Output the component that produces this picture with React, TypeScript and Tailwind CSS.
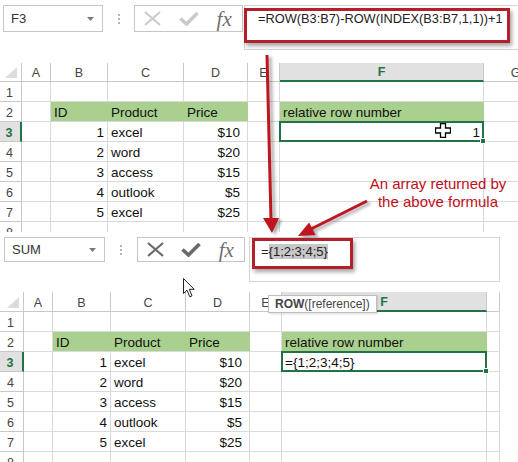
import React from "react";
import { twMerge } from "tailwind-merge";

const data: [number, string, string][] = [
  [1, "excel", "$10"],
  [2, "word", "$20"],
  [3, "access", "$15"],
  [4, "outlook", "$5"],
  [5, "excel", "$25"],
];

const GREEN_FILL = "bg-[#a9d08e] border-r-[#a9d08e]";

function Cell({ className, children }: { className?: string; children?: React.ReactNode }) {
  return (
    <div
      className={twMerge(
        "flex h-[20px] items-end whitespace-nowrap border-r border-b border-[#dadada] text-[13.5px] leading-[16px] text-[#111]",
        className
      )}
    >
      {children}
    </div>
  );
}

function RowHead({ n, sel }: { n: number; sel?: boolean }) {
  return (
    <div
      className={twMerge(
        "flex h-[20px] items-end justify-center border-r border-b border-[#c8c8c8] pr-[2px] text-[12.5px] leading-[16px] text-[#444]",
        sel && "border-r-2 border-r-[#217346] bg-[#e1e1e1] font-bold text-[#217346]"
      )}
    >
      {n}
    </div>
  );
}

function ColHead({ l, sel, h }: { l: string; sel?: boolean; h: string }) {
  return (
    <div
      className={twMerge(
        "flex items-end justify-center border-r border-b border-[#c8c8c8] text-[12.5px] leading-[16px] text-[#444]",
        h,
        sel && "border-b-2 border-b-[#217346] bg-[#e1e1e1] font-bold text-[#217346]"
      )}
    >
      {l}
    </div>
  );
}

function Selection() {
  return (
    <div className="absolute -top-[1px] -right-[1px] -bottom-[1px] -left-[1px] z-10 border-2 border-[#217346]">
      <div className="absolute -right-[4px] -bottom-[4px] h-[6px] w-[6px] border border-white bg-[#217346]" />
    </div>
  );
}

function Sheet({ top }: { top: boolean }) {
  const hh = top ? "h-[19px]" : "h-[20px]";
  const letters = top ? ["A", "B", "C", "D", "E", "F", "G"] : ["A", "B", "C", "D", "E", "F", ""];
  const rows = [1, 2, 3, 4, 5, 6, 7, 8];

  return (
    <div
      className={
        top
          ? "grid h-[169px] w-[518px] grid-cols-[22px_29px_57px_76px_64px_32px_204px_64px] overflow-hidden"
          : "grid h-[170px] w-[500px] grid-cols-[24px_29px_58px_75px_64px_32px_205px_13px] overflow-hidden"
      }
    >
      <div className={twMerge("relative border-r border-b border-[#c8c8c8]", hh)}>
        <svg className="absolute right-[4px] bottom-[3px]" width="12" height="11">
          <path d="M12 0 L12 11 L0 11 Z" fill="#dcdcdc" />
        </svg>
      </div>
      {letters.map((l, i) => (
        <ColHead key={i} l={l} h={hh} sel={l === "F"} />
      ))}

      {rows.map((r) => {
        const d = r >= 3 && r <= 7 ? data[r - 3] : null;
        return (
          <React.Fragment key={r}>
            <RowHead n={r} sel={r === 3} />
            <Cell />
            {r === 2 ? (
              <Cell className={twMerge(GREEN_FILL, "pl-[3px]")}>ID</Cell>
            ) : (
              <Cell className="justify-end pr-[3px]">{d ? d[0] : ""}</Cell>
            )}
            {r === 2 ? (
              <Cell className={twMerge(GREEN_FILL, "pl-[3px]")}>Product</Cell>
            ) : (
              <Cell className="pl-[3px]">{d ? d[1] : ""}</Cell>
            )}
            {r === 2 ? (
              <Cell className={twMerge(GREEN_FILL, "pl-[3px]")}>Price</Cell>
            ) : (
              <Cell className="justify-end pr-[7px]">{d ? d[2] : ""}</Cell>
            )}
            <Cell />
            {r === 2 ? (
              <Cell className={twMerge(GREEN_FILL, "pl-[3px]")}>relative row number</Cell>
            ) : r === 3 ? (
              top ? (
                <Cell className="relative justify-end pr-[3px]">
                  1
                  <Selection />
                </Cell>
              ) : (
                <Cell className="relative pl-[3px]">
                  ={"{"}1;2;3;4;5{"}"}
                  <Selection />
                </Cell>
              )
            ) : (
              <Cell />
            )}
            <Cell />
          </React.Fragment>
        );
      })}
    </div>
  );
}

function NameBox({ label, className }: { label: string; className: string }) {
  return (
    <div
      className={twMerge(
        "flex items-center justify-between border border-[#c6c6c6] bg-white pr-[8px] pl-[7px] text-[13px] text-[#333]",
        className
      )}
    >
      <span>{label}</span>
      <svg width="7" height="4">
        <path d="M0 0 H7 L3.5 4 Z" fill="#7a7a7a" />
      </svg>
    </div>
  );
}

function Dots({ className }: { className: string }) {
  return (
    <div className={twMerge("flex flex-col items-center justify-center gap-[2px]", className)}>
      <div className="h-[2px] w-[2px] bg-[#b4b4b4]" />
      <div className="h-[2px] w-[2px] bg-[#b4b4b4]" />
      <div className="h-[2px] w-[2px] bg-[#b4b4b4]" />
    </div>
  );
}

function FxButtons({ active, className }: { active?: boolean; className: string }) {
  const c = active ? "#6b6b6b" : "#cbcbcb";
  return (
    <div className={twMerge("flex items-center border border-[#c6c6c6] bg-white", className)}>
      <div className="flex w-[36px] justify-center">
        <svg width="17" height="15">
          <path d="M1 1 L16 14 M16 1 L1 14" stroke={c} strokeWidth="2.2" fill="none" />
        </svg>
      </div>
      <div className="flex w-[36px] justify-center">
        <svg width="20" height="15">
          <path d="M1.5 7.5 L7.5 13 L18.5 2" stroke={c} strokeWidth="3.6" fill="none" />
        </svg>
      </div>
      <div className="flex w-[36px] justify-center">
        <span className="font-['Liberation_Serif',serif] text-[21px] leading-[20px] text-[#6f6f6f] italic">fx</span>
      </div>
    </div>
  );
}

export default function App() {
  return (
    <div className="relative h-[462px] w-[518px] overflow-hidden bg-white font-['Liberation_Sans',Arial,sans-serif]">
      {/* first window */}
      <div className="flex h-[63px] items-start pt-[5px] pl-[3px]">
        <NameBox label="F3" className="h-[27px] w-[100px]" />
        <Dots className="h-[27px] w-[31px]" />
        <FxButtons className="h-[27px] w-[109px]" />
        <div className="ml-[1px] h-[45px] flex-1 border border-r-0 border-[#d4d4d4] pt-[2px]">
          <div className="-ml-[1px] h-[35px] w-[266px] overflow-hidden border-[3px] border-[#b3202a] pl-[11px] text-[12.8px] leading-[16px] whitespace-nowrap text-[#222] shadow-[2px_3px_4px_rgba(0,0,0,0.35)]">
            =ROW(B3:B7)-ROW(INDEX(B3:B7,1,1))+1
          </div>
        </div>
      </div>
      <Sheet top />

      {/* second window */}
      <div className="flex h-[60px] items-start pt-[5px] pl-[4px]">
        <NameBox label="SUM" className="h-[25px] w-[101px]" />
        <Dots className="h-[25px] w-[32px]" />
        <FxButtons active className="h-[25px] w-[108px]" />
        <div className="ml-[4px] h-[45px] w-[251px] border border-[#d4d4d4]">
          <div className="ml-[2px] h-[31px] w-[101px] border-[3px] border-[#b3202a] pt-[3px] pl-[6px] text-[13px] leading-[16px] text-[#222] shadow-[2px_3px_4px_rgba(0,0,0,0.35)]">
            =<span className="bg-[#c8c8c8]">{"{"}1;2;3;4;5{"}"}</span>
          </div>
        </div>
      </div>
      <Sheet top={false} />

      {/* arrows */}
      <svg className="pointer-events-none absolute top-0 left-0" width="518" height="462">
        <defs>
          <filter id="blur" x="-20%" y="-20%" width="140%" height="140%">
            <feGaussianBlur stdDeviation="1.4" />
          </filter>
        </defs>
        <g filter="url(#blur)" opacity="0.45" transform="translate(3,2)">
          <line x1="267" y1="55" x2="271" y2="220" stroke="#444" strokeWidth="3" />
          <polygon points="263,218 279,218 272,233" fill="#444" />
          <line x1="367" y1="201" x2="311" y2="229" stroke="#444" strokeWidth="3" />
          <polygon points="298,236 315.5,235 309.1,222.6" fill="#444" />
        </g>
        <line x1="267" y1="55" x2="271" y2="220" stroke="#c0141e" strokeWidth="3" />
        <polygon points="263,218 279,218 272,233" fill="#c0141e" />
        <line x1="367" y1="201" x2="311" y2="229" stroke="#c0141e" strokeWidth="3" />
        <polygon points="298,236 315.5,235 309.1,222.6" fill="#c0141e" />
      </svg>

      {/* annotation */}
      <div className="absolute top-[175px] left-[358px] w-[160px] text-center text-[15px] leading-[18px] text-[#c0101c]">
        An array returned by
        <br />
        the above formula
      </div>

      {/* tooltip */}
      <div className="absolute top-[295px] left-[268px] h-[18px] border border-[#bebebe] bg-white px-[6px] text-[12px] leading-[16px] whitespace-nowrap text-[#444] shadow-[1px_1px_2px_rgba(0,0,0,0.15)]">
        <span className="font-bold">ROW</span>([reference])
      </div>

      {/* cell cursor */}
      <svg className="absolute top-[123px] left-[435px]" width="16" height="15">
        <path
          d="M5.5 0.5 H10.5 V5 H15.5 V10 H10.5 V14.5 H5.5 V10 H0.5 V5 H5.5 Z"
          fill="white"
          stroke="black"
          strokeWidth="1.3"
        />
      </svg>

      {/* mouse pointer */}
      <svg className="absolute top-[278px] left-[183px]" width="13" height="20">
        <path
          d="M0.5 0.5 L0.5 15.5 L4 12.2 L6.8 18.8 L9 17.8 L6.3 11.3 L11.2 11.3 Z"
          fill="white"
          stroke="#222"
          strokeWidth="1"
        />
      </svg>
    </div>
  );
}
